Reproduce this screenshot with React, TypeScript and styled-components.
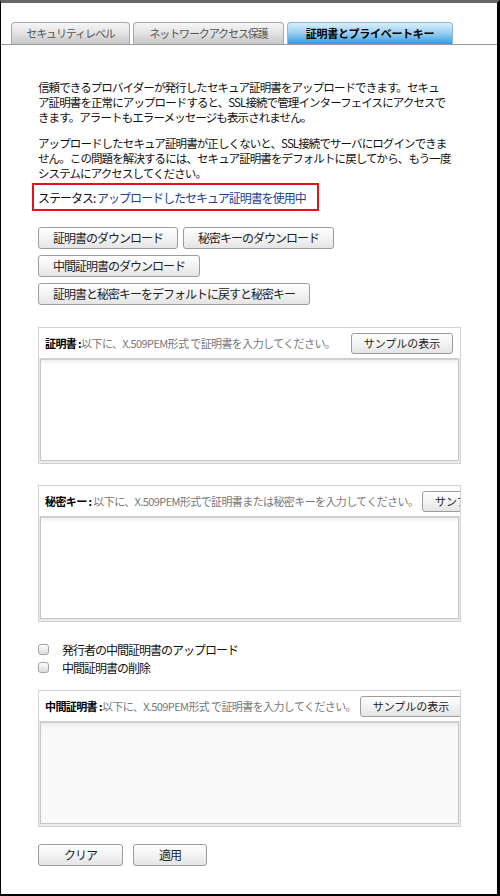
import { createGlobalStyle } from "styled-components";
import styled from "styled-components";

const GlobalStyle = createGlobalStyle`
  html, body {
    margin: 0;
    padding: 0;
    background: #fff;
  }
  body {
    font-family: "Noto Sans CJK JP", "Liberation Sans", sans-serif;
    color: #222;
  }
`;

const Frame = styled.div`
  width: 500px;
  height: 896px;
  box-sizing: border-box;
  border-left: 1px solid #000;
  border-right: 3px solid #000;
  border-bottom: 2px solid #000;
  border-top: 3px solid #666;
  background: #fff;
  overflow: hidden;
`;

const TabBar = styled.div`
  display: flex;
  gap: 3px;
  padding: 19px 0 0 10px;
  border-bottom: 1px solid #9a9a9a;
`;

const Tab = styled.div<{ $width: number; $active?: boolean }>`
  width: ${(p) => p.$width}px;
  height: 22px;
  box-sizing: border-box;
  border: 1px solid ${(p) => (p.$active ? "#8ab8d8" : "#a8a8a8")};
  border-bottom: none;
  border-radius: 4px 4px 0 0;
  background: ${(p) =>
    p.$active
      ? "linear-gradient(#d8effc, #9fd0f2 45%, #2f9ddf)"
      : "linear-gradient(#f6f6f6, #e2e2e2 50%, #c6c6c6)"};
  color: ${(p) => (p.$active ? "#000" : "#555")};
  font-weight: ${(p) => (p.$active ? 700 : 400)};
  font-size: 11px;
  letter-spacing: ${(p) => (p.$active ? "-0.3px" : "-1.1px")};
  line-height: 21px;
  text-align: center;
  white-space: nowrap;
`;

const Content = styled.div`
  width: 423px;
  padding: 35px 0 0 37px;
  font-size: 12px;
  line-height: 15px;
`;

const Para = styled.p`
  margin: 0;
  font-size: 11.5px;
  letter-spacing: -0.9px;
  line-height: 15px;
  color: #111;

  & + & {
    margin-top: 11px;
  }
`;

const Line = styled.span`
  display: block;
  white-space: nowrap;
`;

const StatusBox = styled.div`
  display: flex;
  align-items: center;
  width: fit-content;
  box-sizing: border-box;
  height: 28px;
  margin: 2px 0 0 -6px;
  padding: 0 11px 0 4px;
  border: 2px solid #e8101a;
  font-size: 12px;
  letter-spacing: -1px;
  color: #111;
  white-space: nowrap;
`;

const StatusValue = styled.span`
  color: #1d3f93;
`;

const ButtonStack = styled.div`
  display: flex;
  flex-direction: column;
  align-items: flex-start;
  gap: 6px;
  margin-top: 16px;
`;

const ButtonRow = styled.div`
  display: flex;
  gap: 5px;
`;

const Button = styled.button<{ $width?: number }>`
  display: block;
  height: 22px;
  box-sizing: border-box;
  ${(p) => (p.$width ? `width: ${p.$width}px;` : "")}
  margin: 0;
  padding: 0 14px;
  border: 1px solid #9c9c9c;
  border-radius: 3px;
  background: linear-gradient(#ffffff, #f3f3f3 50%, #e4e4e4);
  font-family: "Noto Sans CJK JP", "Liberation Sans", sans-serif;
  font-size: 12px;
  letter-spacing: -1px;
  line-height: 20px;
  color: #222;
  white-space: nowrap;
`;

const Box = styled.div<{ $gap: number }>`
  margin-top: ${(p) => p.$gap}px;
  border: 1px solid #d2d2d2;
  background: #ebebeb;
`;

const BoxHeader = styled.div`
  display: flex;
  align-items: center;
  height: 30px;
  padding-left: 6px;
  background: #fff;
  white-space: nowrap;
  overflow: hidden;
  font-size: 11px;
  letter-spacing: -0.6px;
`;

const HeaderText = styled.span`
  flex-shrink: 0;
  padding-right: 4px;
  color: #777;
`;

const HeaderLabel = styled.b`
  color: #000;
  font-weight: 700;
`;

const SampleButton = styled(Button)<{ $right: number }>`
  flex-shrink: 0;
  width: 102px;
  height: 21px;
  margin-left: auto;
  margin-right: ${(p) => p.$right}px;
  padding: 0;
  font-size: 11px;
  letter-spacing: 0;
  line-height: 19px;
`;

const TextArea = styled.textarea<{ $muted?: boolean }>`
  display: block;
  width: calc(100% - 2px);
  height: 103px;
  margin: 0 1px 2px;
  box-sizing: border-box;
  border: 1px solid #c6c6c6;
  border-top: 2px solid #cfcfcf;
  background: ${(p) => (p.$muted ? "#f9f9f9" : "#fff")};
  box-shadow: inset 0 5px 5px -3px rgba(0, 0, 0, 0.07);
  resize: none;
  outline: none;
`;

const CheckList = styled.div`
  margin-top: 18px;
`;

const CheckRow = styled.label`
  display: flex;
  align-items: center;
  gap: 13px;
  height: 18px;
  font-size: 12px;
  letter-spacing: -1px;
  color: #111;
`;

const CheckBox = styled.span`
  width: 11px;
  height: 11px;
  box-sizing: border-box;
  border: 1px solid #a4a4a4;
  border-radius: 3px;
  background: linear-gradient(#fdfdfd, #dcdcdc);
`;

const Footer = styled.div`
  display: flex;
  gap: 10px;
  margin-top: 17px;
`;

const tabs = [
  { label: "セキュリティレベル", width: 119 },
  { label: "ネットワークアクセス保護", width: 151 },
  { label: "証明書とプライベートキー", width: 166, active: true },
];

const intro = [
  "信頼できるプロバイダーが発行したセキュア証明書をアップロードできます。セキュ",
  "ア証明書を正常にアップロードすると、SSL接続で管理インターフェイスにアクセスで",
  "きます。アラートもエラーメッセージも表示されません。",
];

const warning = [
  "アップロードしたセキュア証明書が正しくないと、SSL接続でサーバにログインできま",
  "せん。この問題を解決するには、セキュア証明書をデフォルトに戻してから、もう一度",
  "システムにアクセスしてください。",
];

const App = () => {
  return (
    <>
      <GlobalStyle />
      <Frame>
        <TabBar>
          {tabs.map((t) => (
            <Tab key={t.label} $width={t.width} $active={t.active}>
              {t.label}
            </Tab>
          ))}
        </TabBar>

        <Content>
          <Para>
            {intro.map((l) => (
              <Line key={l}>{l}</Line>
            ))}
          </Para>
          <Para>
            {warning.map((l) => (
              <Line key={l}>{l}</Line>
            ))}
          </Para>

          <StatusBox>
            ステータス:&nbsp;<StatusValue>アップロードしたセキュア証明書を使用中</StatusValue>
          </StatusBox>

          <ButtonStack>
            <ButtonRow>
              <Button>証明書のダウンロード</Button>
              <Button>秘密キーのダウンロード</Button>
            </ButtonRow>
            <Button>中間証明書のダウンロード</Button>
            <Button>証明書と秘密キーをデフォルトに戻すと秘密キー</Button>
          </ButtonStack>

          <Box $gap={22}>
            <BoxHeader>
              <HeaderText>
                <HeaderLabel>証明書 :</HeaderLabel>以下に、X.509PEM形式 で証明書を入力してください。
              </HeaderText>
              <SampleButton $right={7}>サンプルの表示</SampleButton>
            </BoxHeader>
            <TextArea />
          </Box>

          <Box $gap={21}>
            <BoxHeader>
              <HeaderText>
                <HeaderLabel>秘密キー :</HeaderLabel> 以下に、X.509PEM形式で証明書または秘密キーを入力してください。
              </HeaderText>
              <SampleButton $right={0}>サンプルの表示</SampleButton>
            </BoxHeader>
            <TextArea />
          </Box>

          <CheckList>
            <CheckRow>
              <CheckBox />
              発行者の中間証明書のアップロード
            </CheckRow>
            <CheckRow>
              <CheckBox />
              中間証明書の削除
            </CheckRow>
          </CheckList>

          <Box $gap={14}>
            <BoxHeader>
              <HeaderText>
                <HeaderLabel>中間証明書 :</HeaderLabel>以下に、X.509PEM形式 で証明書を入力してください。
              </HeaderText>
              <SampleButton $right={3}>サンプルの表示</SampleButton>
            </BoxHeader>
            <TextArea $muted />
          </Box>

          <Footer>
            <Button $width={85}>クリア</Button>
            <Button $width={74}>適用</Button>
          </Footer>
        </Content>
      </Frame>
    </>
  );
};

export default App;
